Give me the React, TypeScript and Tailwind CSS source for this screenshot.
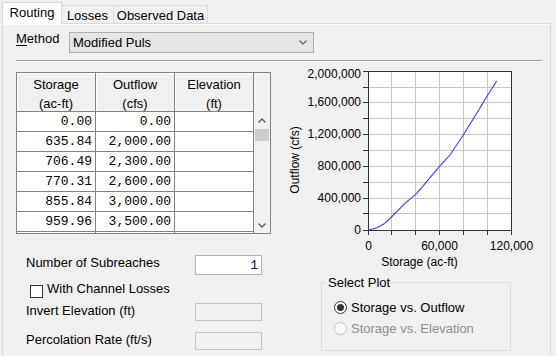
import React from "react";

const rows: [string, string][] = [
  ["0.00", "0.00"],
  ["635.84", "2,000.00"],
  ["706.49", "2,300.00"],
  ["770.31", "2,600.00"],
  ["855.84", "3,000.00"],
  ["959.96", "3,500.00"],
  ["", ""],
];

function Chart() {
  const vx = [83, 106, 130, 154, 178, 202, 226];
  const hy = [9, 25, 40, 56, 72, 88, 104, 120, 136, 151, 168];
  const yLabels: [string, number][] = [
    ["2,000,000", 12],
    ["1,600,000", 40],
    ["1,200,000", 72],
    ["800,000", 104],
    ["400,000", 136],
    ["0", 168],
  ];
  const pts = [
    [83.3, 168],
    [88, 167],
    [91.7, 165.7],
    [98.3, 162.3],
    [104, 157.5],
    [110, 151.3],
    [120, 141.3],
    [131.7, 131.3],
    [141.7, 119.7],
    [154.3, 104.7],
    [165, 93],
    [178.3, 73],
    [191.7, 51.3],
    [201.7, 34.7],
    [211.7, 19],
  ];
  const d = pts.map((p, i) => `${i ? "L" : "M"}${p[0]} ${p[1]}`).join(" ");
  return (
    <svg width={260} height={210} className="block" fontFamily="Liberation Sans, Arial, sans-serif" fontSize={12}>
      <rect x={83.5} y={9.5} width={143} height={159} fill="#ffffff" />
      {vx.slice(1, -1).map((x) => (
        <line key={"v" + x} x1={x + 0.5} x2={x + 0.5} y1={9} y2={168} stroke="#c4c4c4" />
      ))}
      {hy.slice(1, -1).map((y) => (
        <line key={"h" + y} x1={83} x2={226} y1={y + 0.5} y2={y + 0.5} stroke="#c4c4c4" />
      ))}
      <rect x={83.5} y={9.5} width={143} height={159} fill="none" stroke="#333333" />
      {hy.map((y) => (
        <line key={"t" + y} x1={78} x2={83} y1={y + 0.5} y2={y + 0.5} stroke="#333333" />
      ))}
      {vx.map((x) => (
        <line key={"b" + x} x1={x + 0.5} x2={x + 0.5} y1={168} y2={173} stroke="#333333" />
      ))}
      {yLabels.map(([t, y]) => (
        <text key={t} x={76} y={y + 4.3} textAnchor="end" fill="#000">
          {t}
        </text>
      ))}
      <text x={83.5} y={187.5} textAnchor="middle" fill="#000">0</text>
      <text x={154.5} y={187.5} textAnchor="middle" fill="#000">60,000</text>
      <text x={226.5} y={187.5} textAnchor="middle" fill="#000">120,000</text>
      <text x={134.5} y={204} textAnchor="middle" fill="#000">Storage (ac-ft)</text>
      <text x={14} y={98} textAnchor="middle" fill="#000" transform="rotate(-90 14 98)">
        Outflow (cfs)
      </text>
      <path d={d} fill="none" stroke="#3a3aff" strokeWidth={1.1} />
    </svg>
  );
}

function Chevron({ up, color = "#606060" }: { up?: boolean; color?: string }) {
  return (
    <svg width={8} height={5} viewBox="0 0 8 5" className="block">
      <path d={up ? "M0.5 4.5 L4 1 L7.5 4.5" : "M0.5 0.5 L4 4 L7.5 0.5"} fill="none" stroke={color} strokeWidth={1.4} />
    </svg>
  );
}

export default function App() {
  return (
    <div className="w-[556px] h-[356px] bg-[#f0f0f0] overflow-hidden text-[13px] leading-[15px] text-black font-['Liberation_Sans',Arial,sans-serif]">
      {/* tabs */}
      <div className="flex items-end h-[23px] pl-[2px]">
        <div className="relative z-10 -mb-px h-[22px] w-[60px] bg-white border border-b-0 border-[#d9d9d9] flex items-center justify-center pb-[2px]">
          Routing
        </div>
        <div className="h-[18px] w-[52px] border-t border-r border-[#d9d9d9] flex items-center justify-center pt-[1px]">
          Losses
        </div>
        <div className="h-[18px] w-[94px] border-t border-r border-[#d9d9d9] flex items-center justify-center pt-[1px]">
          Observed Data
        </div>
      </div>

      {/* panel */}
      <div className="ml-[2px] w-[549px] h-[333px] border border-b-0 border-[#d9d9d9]">
        <div className="h-full border-t border-white">
          {/* method row */}
          <div className="flex items-start mt-[7px] pl-[13px] h-[21px]">
            <div className="w-[53px] -mt-[1px]">
              <span className="underline underline-offset-2">M</span>ethod
            </div>
            <div className="w-[245px] h-[21px] bg-[#e5e5e5] border border-[#adadad] flex items-center justify-between pl-[3px] pr-[6px]">
              <span>Modified Puls</span>
              <Chevron color="#707070" />
            </div>
          </div>
          <div className="ml-[13px] mt-[7px] w-[526px] border-t border-[#a0a0a0] border-b border-b-white" />

          {/* main */}
          <div className="flex">
            {/* left column */}
            <div className="ml-[13px] pt-[10px] w-[255px]">
              <div className="flex w-[255px] h-[162px] border border-[#828282] overflow-hidden bg-[#f0f0f0]">
                <div className="w-[237px]">
                  <div className="flex h-[39px]">
                    {[
                      ["Storage", "(ac-ft)"],
                      ["Outflow", "(cfs)"],
                      ["Elevation", "(ft)"],
                    ].map(([a, b]) => (
                      <div
                        key={a}
                        className="w-[79px] border-r border-b border-[#828282] bg-[#f0f0f0] shadow-[inset_1px_1px_0_#ffffff] flex flex-col items-center pt-[2px] leading-[19px]"
                      >
                        <span>{a}</span>
                        <span>{b}</span>
                      </div>
                    ))}
                  </div>
                  {rows.map(([s, o], i) => (
                    <div key={i} className="flex h-[20px] font-['Liberation_Mono','Courier_New',monospace] text-[13px]">
                      <div className="w-[79px] bg-white border-r border-b border-[#828282] flex items-center justify-end pr-[3px]">{s}</div>
                      <div className="w-[79px] bg-white border-r border-b border-[#828282] flex items-center justify-end pr-[3px]">{o}</div>
                      <div className="w-[79px] bg-white border-r border-b border-[#828282]" />
                    </div>
                  ))}
                </div>
                <div className="w-[16px] flex flex-col">
                  <div className="h-[39px]" />
                  <div className="h-[17px] flex items-center justify-center">
                    <Chevron up />
                  </div>
                  <div className="flex-1 px-[1px]">
                    <div className="h-[12px] bg-[#cdcdcd]" />
                  </div>
                  <div className="h-[17px] flex items-center justify-center pt-[2px]">
                    <Chevron />
                  </div>
                </div>
              </div>

              {/* form */}
              <div className="mt-[21px] flex items-start h-[20px]">
                <div className="ml-[10px] w-[169px]">Number of Subreaches</div>
                <div className="w-[67px] h-[20px] bg-white border border-[#b4b4b4] font-['Liberation_Mono','Courier_New',monospace] flex items-center justify-end pr-[3px] text-[#10104a]">
                  1
                </div>
              </div>
              <div className="mt-[6px] flex items-start h-[15px]">
                <div className="ml-[14px] mt-[4px] w-[13px] h-[13px] border border-[#333333] bg-white" />
                <div className="ml-[4px]">With Channel Losses</div>
              </div>
              <div className="mt-[7px] flex items-start h-[18px]">
                <div className="ml-[10px] w-[169px]">Invert Elevation (ft)</div>
                <div className="w-[67px] h-[18px] bg-[#f0f0f0] border border-[#c4c4c4]" />
              </div>
              <div className="mt-[11px] flex items-start h-[18px]">
                <div className="ml-[10px] w-[169px]">Percolation Rate (ft/s)</div>
                <div className="w-[67px] h-[18px] bg-[#f0f0f0] border border-[#c4c4c4]" />
              </div>
            </div>

            {/* right column */}
            <div className="ml-[14px]">
              <Chart />
              <fieldset className="ml-[36px] mt-[3px] w-[190px] h-[76px] border border-[#dcdcdc] pl-[4px]">
                <legend className="px-[2px]">Select Plot</legend>
                <div className="mt-[9px] flex items-center h-[16px]">
                  <div className="ml-[8px] w-[13px] h-[13px] rounded-full border border-[#333333] bg-white flex items-center justify-center">
                    <div className="w-[7px] h-[7px] rounded-full bg-[#333333]" />
                  </div>
                  <span className="ml-[4px]">Storage vs. Outflow</span>
                </div>
                <div className="mt-[5px] flex items-center h-[16px]">
                  <div className="ml-[8px] w-[13px] h-[13px] rounded-full border border-[#c2c2c2] bg-[#fafafa]" />
                  <span className="ml-[4px] text-[#8f8f8f]">Storage vs. Elevation</span>
                </div>
              </fieldset>
            </div>
          </div>
        </div>
      </div>
    </div>
  );
}
